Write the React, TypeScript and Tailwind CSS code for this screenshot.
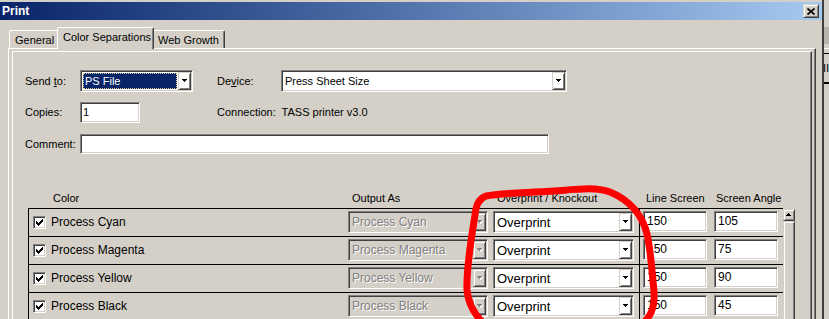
import React from 'react'

const sunken =
  'border border-t-[#808080] border-l-[#808080] border-r-white border-b-white shadow-[inset_1px_1px_0_#404040,inset_-1px_-1px_0_#d4d0c8] p-px'
const raised =
  'border border-t-[#d4d0c8] border-l-[#d4d0c8] border-r-[#404040] border-b-[#404040] shadow-[inset_1px_1px_0_#fff,inset_-1px_-1px_0_#808080]'

function Arrow({ up, grey }: { up?: boolean; grey?: boolean }) {
  const fill = grey ? '#808080' : '#000'
  return (
    <svg width="6" height="4" viewBox="0 0 6 4" shapeRendering="crispEdges">
      {grey && (
        <g fill="#fff" transform="translate(1,1)">
          <rect x="0" y="0" width="5" height="1" />
          <rect x="1" y="1" width="3" height="1" />
          <rect x="2" y="2" width="1" height="1" />
        </g>
      )}
      <g fill={fill} transform={up ? 'translate(0,3) scale(1,-1)' : undefined}>
        <rect x="0" y="0" width="5" height="1" />
        <rect x="1" y="1" width="3" height="1" />
        <rect x="2" y="2" width="1" height="1" />
      </g>
    </svg>
  )
}

function Combo({
  value,
  width,
  disabled,
  selected,
  big,
}: {
  value: string
  width: string
  disabled?: boolean
  selected?: boolean
  big?: boolean
}) {
  return (
    <div className={`${sunken} ${width} h-[22px] shrink-0 flex ${disabled ? 'bg-[#d4d0c8]' : 'bg-white'}`}>
      {selected ? (
        <div className="flex-1 m-px bg-[#0a246a] border border-dotted border-[#d8d090] flex items-center pl-[1px] text-white">
          {value}
        </div>
      ) : (
        <div
          className={`flex-1 flex items-center pl-[2px] ${big ? 'text-[13px]' : ''} ${
            disabled ? 'text-[12px] text-[#808080] [text-shadow:1px_1px_0_#fff]' : ''
          }`}
        >
          {value}
        </div>
      )}
      <div className={`${raised} w-[13px] flex items-center justify-center`}>
        <Arrow grey={disabled} />
      </div>
    </div>
  )
}

function Input({ value, width, height, size }: { value: string; width: string; height: string; size?: string }) {
  return (
    <div className={`${sunken} ${width} ${height} shrink-0 bg-white flex items-center pl-[2px] ${size ?? ''}`}>
      {value}
    </div>
  )
}

function Check() {
  return (
    <div className={`${sunken} w-[13px] h-[13px] bg-white flex items-center justify-center shrink-0`}>
      <svg width="7" height="7" viewBox="0 0 7 7" shapeRendering="crispEdges">
        <path d="M0 2h1v1h1v1h1V3h1V2h1V1h1V0h1v3h-1v1h-1v1h-1v1h-1v1H2V6H1V5H0z" fill="#000" />
      </svg>
    </div>
  )
}

const rows = [
  { name: 'Process Cyan', angle: '105' },
  { name: 'Process Magenta', angle: '75' },
  { name: 'Process Yellow', angle: '90' },
  { name: 'Process Black', angle: '45' },
]

export default function App() {
  return (
    <div className="relative w-[829px] h-[319px] overflow-hidden bg-[#d4d0c8] flex font-['Liberation_Sans',Arial,sans-serif] text-[11px] leading-[13px] text-black">
      <div className="w-[824px] h-full border-r-2 border-[#404040] flex flex-col shrink-0">
        {/* title bar */}
        <div className="mt-[2px] h-[18px] shrink-0 bg-linear-to-r from-[#0a246a] to-[#a6caf0] flex items-center justify-between pl-[2px] pr-[3px]">
          <span className="text-white font-bold text-[12px]">Print</span>
          <div className={`${raised} bg-[#d4d0c8] w-[16px] h-[14px] flex items-center justify-center`}>
            <svg width="8" height="7" viewBox="0 0 8 7">
              <path d="M0.5 0.5L7.5 6.5M7.5 0.5L0.5 6.5" stroke="#000" strokeWidth="1.7" />
            </svg>
          </div>
        </div>

        {/* tabs */}
        <div className="mt-[7px] h-[21px] shrink-0 flex items-end pl-[9px]">
          <div className="w-[48px] h-[18px] border-t border-l border-white rounded-tl-[2px] flex items-center pl-[5px] pt-[1px]">
            General
          </div>
          <div className="relative z-10 w-[97px] h-[22px] -mb-px bg-[#d4d0c8] border-t border-l border-white border-r border-r-[#404040] shadow-[inset_-1px_0_0_#808080] rounded-t-[2px] flex items-center pl-[5px] pb-[3px] whitespace-nowrap">
            Color Separations
          </div>
          <div className="w-[71px] h-[18px] border-t border-white border-r border-r-[#404040] shadow-[inset_-1px_0_0_#808080] rounded-tr-[2px] flex items-center pl-[4px] pt-[1px] whitespace-nowrap">
            Web Growth
          </div>
        </div>

        {/* tab panel */}
        <div className="ml-[8px] w-[808px] flex-1 min-h-0 overflow-hidden flex border-t border-l border-white border-r border-r-[#404040] shadow-[inset_-1px_0_0_#808080] pt-[2px] pl-[3px] pr-[3px]">
          <div className="w-[800px] flex flex-col border-t border-l border-white border-r border-r-[#404040] shadow-[inset_-1px_0_0_#808080] pl-[12px]">
            <div className="mt-[18px] h-[22px] shrink-0 flex items-center">
              <span className="w-[55px] shrink-0">
                Send <span className="underline">t</span>o:
              </span>
              <Combo value="PS File" width="w-[113px]" selected />
              <span className="w-[24px] shrink-0" />
              <span className="w-[64px] shrink-0">
                De<span className="underline">v</span>ice:
              </span>
              <Combo value="Press Sheet Size" width="w-[286px]" />
            </div>

            <div className="mt-[10px] h-[21px] shrink-0 flex items-center">
              <span className="w-[55px] shrink-0">Copies:</span>
              <Input value="1" width="w-[60px]" height="h-[21px]" />
              <span className="w-[77px] shrink-0" />
              <span>Connection:&nbsp; TASS printer v3.0</span>
            </div>

            <div className="mt-[11px] h-[20px] shrink-0 flex items-center">
              <span className="w-[55px] shrink-0">Comment:</span>
              <Input value="" width="w-[469px]" height="h-[20px]" />
            </div>

            {/* column headers */}
            <div className="mt-[37px] h-[14px] shrink-0 flex items-center pl-[28px]">
              <span className="w-[299px] shrink-0">Color</span>
              <span className="w-[145px] shrink-0">Output As</span>
              <span className="w-[149px] shrink-0">Overprint / Knockout</span>
              <span className="w-[70px] shrink-0">Line Screen</span>
              <span>Screen Angle</span>
            </div>

            {/* table */}
            <div className="mt-[3px] ml-[3px] shrink-0 flex">
              <div className="w-[755px] shrink-0 border-l border-t border-black flex flex-col">
                {rows.map((r) => (
                  <div key={r.name} className="h-[28px] shrink-0 border-b border-black flex">
                    <div className="w-[319px] shrink-0 flex items-center pl-[4px]">
                      <Check />
                      <span className="ml-[5px] text-[12px]">{r.name}</span>
                    </div>
                    <div className="pt-[2px] flex">
                      <Combo value={r.name} width="w-[140px]" disabled />
                      <span className="w-[5px] shrink-0" />
                      <Combo value="Overprint" width="w-[141px]" big />
                      <span className="w-[5px] shrink-0" />
                    </div>
                    <div className="border-l border-black flex pl-[3px] pt-[2px] h-full">
                      <Input value="150" width="w-[64px]" height="h-[21px]" size="text-[12px] pl-[3px]" />
                      <span className="w-[7px] shrink-0" />
                      <Input value={r.angle} width="w-[64px]" height="h-[21px]" size="text-[12px] pl-[3px]" />
                    </div>
                  </div>
                ))}
              </div>
              <div className="w-[12px] shrink-0 mt-px flex flex-col h-[120px]">
                <div className={`${raised} h-[12px] shrink-0 flex items-center justify-center`}>
                  <Arrow up />
                </div>
                <div className={`${raised} flex-1`} />
              </div>
            </div>
          </div>
        </div>
      </div>

      {/* edge of the window behind */}
      <div className="w-[5px] shrink-0 flex flex-col">
        <div className="h-[27px] shrink-0" />
        <div className="h-[17px] shrink-0 bg-[#b8b4ac]" />
        <div className="h-[4px] shrink-0" />
        <div className="h-[5px] shrink-0 border-t border-white" />
        <div className="h-[1px] shrink-0 bg-black" />
        <div className="h-[28px] shrink-0 text-[11px] leading-[28px] -ml-[1px]">II</div>
        <div className="h-[2px] shrink-0 bg-black" />
      </div>

      {/* red hand-drawn mark */}
      <svg
        className="absolute inset-0 pointer-events-none"
        width="829"
        height="319"
        viewBox="0 0 829 319"
      >
        <path
          d="M642 324 C652 316 655 306 654 292 C652 272 651 252 647 234 C643 216 630 200 610 192 C596 187 580 189 555 191 C525 193 500 193 486 196 C478 199 476 206 475 215 C471 240 466 270 467 290 C468 303 474 314 484 324"
          fill="none"
          stroke="#ff0000"
          strokeWidth="7"
          strokeLinecap="round"
          strokeLinejoin="round"
        />
      </svg>
    </div>
  )
}
